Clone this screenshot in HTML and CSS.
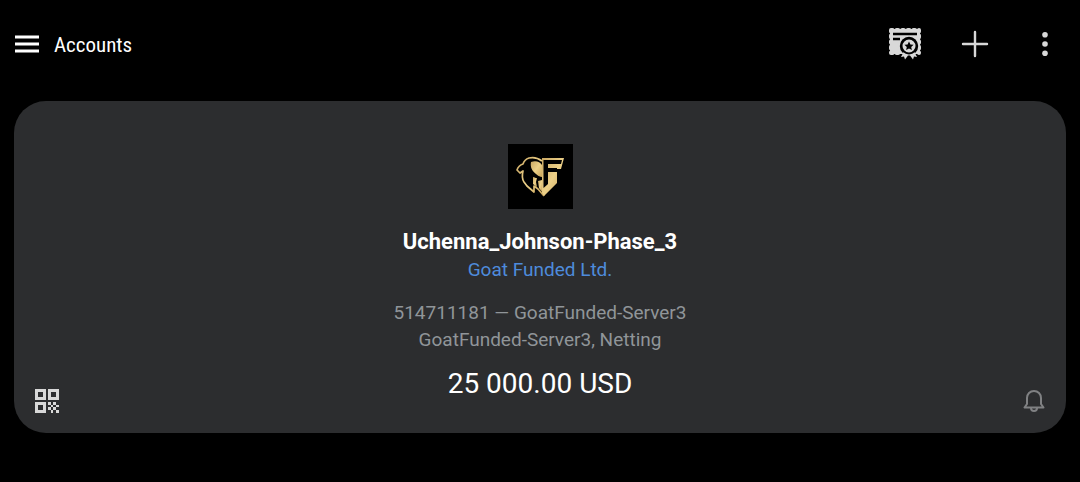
FILE: index.html
```html
<!DOCTYPE html>
<html lang="en">
<head>
    <meta charset="UTF-8">
    <meta name="viewport" content="width=device-width, initial-scale=1.0">
    <title>Accounts</title>
    <link rel="stylesheet" href="styles.css">
</head>
<body>
    <!-- Top bar -->
    <header class="topbar">
        <button class="icon-btn menu-btn" aria-label="Menu">
            <svg width="24" height="24" viewBox="0 0 24 24">
                <path d="M0 5h24M0 12h24M0 19h24" stroke="#fff" stroke-width="3"/>
            </svg>
        </button>
        <h1 class="title">Accounts</h1>
        <div class="actions">
            <button class="icon-btn" aria-label="Certificates">
                <svg width="34" height="34" viewBox="0 0 34 34">
                    <rect x="2" y="2" width="30" height="25" fill="#d8d8d8"/>
                    <path d="M3 3h28M3 26h10M3 3v23M31 3v23" fill="none" stroke="#d8d8d8" stroke-width="4" stroke-linecap="round" stroke-dasharray="1.600 4"/>
                    <path d="M5 7h24M5 12h7" stroke="#000" stroke-width="2.400"/>
                    <circle cx="21" cy="19" r="9.200" fill="#000"/>
                    <path d="M16 24l-3 6 3-.5 1 3 3-4h2l3 4 1-3 3 .5-3-6z" fill="#d8d8d8"/>
                    <circle cx="21" cy="19" r="7.500" fill="#d8d8d8" stroke="#000" stroke-width="2"/>
                    <path d="M21 14.500l1.400 2.900 3.200.4-2.400 2.200.7 3.100-2.900-1.600-2.900 1.600.7-3.100-2.400-2.200 3.200-.4z" fill="#000"/>
                </svg>
            </button>
            <button class="icon-btn" aria-label="Add account">
                <svg width="28" height="28" viewBox="0 0 28 28">
                    <path d="M14 2v24M2 14h24" stroke="#d8d8d8" stroke-width="2.400" stroke-linecap="round"/>
                </svg>
            </button>
            <button class="icon-btn" aria-label="More options">
                <svg width="28" height="28" viewBox="0 0 28 28" fill="#d8d8d8">
                    <circle cx="14" cy="4.700" r="2.800"/>
                    <circle cx="14" cy="14" r="2.800"/>
                    <circle cx="14" cy="23.300" r="2.800"/>
                </svg>
            </button>
        </div>
    </header>

    <!-- Current account -->
    <main class="card">
        <svg class="logo" viewBox="0 0 65 65" role="img" aria-label="Goat Funded">
            <defs>
                <linearGradient id="gold" x1="0" y1="0" x2="1" y2="1">
                    <stop offset="0" stop-color="#c9a763"/>
                    <stop offset=".5" stop-color="#ecd088"/>
                    <stop offset="1" stop-color="#c9a45a"/>
                </linearGradient>
            </defs>
            <rect width="65" height="65" fill="#000"/>
            <!-- goat head -->
            <path d="M34 17c-4-3-9-4-13-3-3 1-5 3-6 6-3 1-5 3-6 6l3 3 3-2c-1 4-1 8 1 11l3 4 7 6v-6l4 3 6 7" fill="none" stroke="url(#gold)" stroke-width="1.700" stroke-linejoin="round"/>
            <path d="M23 18c5-2 9 0 11 3v12c-2 0-4-1-6-3-4-3-6-7-5-12z" fill="url(#gold)"/>
            <path d="M25 33l4 1-1 4 1 5-4-3z" fill="url(#gold)"/>
            <path d="M30 37l4-1v12l-3-4z" fill="url(#gold)"/>
            <path d="M22 25c1 5 5 8 10 9" fill="none" stroke="#000" stroke-width="2"/>
            <!-- shield with the letter F -->
            <path d="M34 14h22l-3 11h-4v14L36 52l-2-3z" fill="url(#gold)"/>
            <path d="M35.500 16H54l-1 4H40v4h9v4h-9v12l-4.500 4z" fill="#000"/>
        </svg>
        <h2 class="name">Uchenna_Johnson-Phase_3</h2>
        <a class="broker" href="#">Goat Funded Ltd.</a>
        <div class="details">
            <p>514711181 — GoatFunded-Server3</p>
            <p>GoatFunded-Server3, Netting</p>
        </div>
        <p class="balance">25 000.00 USD</p>
        <button class="icon-btn corner qr" aria-label="Show QR code">
            <svg width="24" height="24" viewBox="0 0 24 24">
                <path d="M1.500 1.500h8v8h-8zM14.500 1.500h8v8h-8zM1.500 14.500h8v8h-8z" fill="none" stroke="#d8d8d8" stroke-width="3"/>
                <path d="M13 13h3v3h-3zM18 13h3v3h-3zM16 16h2v2h-2zM21 16h3v2h-3zM18 18h3v3h-3zM13 18h3v3h-3zM16 21h2v3h-2zM21 21h3v3h-3z" fill="#d8d8d8"/>
            </svg>
        </button>
        <button class="icon-btn corner bell" aria-label="Notifications">
            <svg width="24" height="24" viewBox="0 0 24 24" fill="none" stroke="#808183" stroke-width="2">
                <path d="M2.500 18.500h19l-2.500-3.500V9c0-4-3-7-7-7s-7 3-7 7v6z" stroke-linejoin="round"/>
                <path d="M9 19c0 4 6 4 6 0"/>
            </svg>
        </button>
    </main>
</body>
</html>
```
FILE: styles.css
```css
:root {
    --bg: #000;
    --card-bg: #2c2d2f;
    --text: #fff;
    --muted: #909599;
    --link: #4e8bdc;
}

* {
    box-sizing: border-box;
}

body {
    margin: 0;
    background-color: var(--bg);
    color: var(--text);
    font-family: Roboto, sans-serif;
}

h1, h2, p {
    margin: 0;
}

.icon-btn {
    display: flex;
    padding: 0;
    border: none;
    background: none;
    cursor: pointer;
}

/* Top bar */
.topbar {
    display: flex;
    align-items: center;
    height: 88px;
    padding: 0 21px 0 15px;
}

.title {
    margin-left: 15px;
    padding-top: 2px;
    font-family: "Roboto Condensed", "Liberation Sans Narrow", Roboto, sans-serif;
    font-size: 21px;
    font-weight: 400;
    line-height: 28px;
}

.actions {
    display: flex;
    align-items: center;
    gap: 42px;
    margin-left: auto;
}

.actions .icon-btn:first-child {
    margin-right: -3px;
}

/* Account card */
.card {
    position: relative;
    display: flex;
    flex-direction: column;
    align-items: center;
    margin: 13px 14px;
    padding: 43px 20px 31px;
    border-radius: 32px;
    background-color: var(--card-bg);
    text-align: center;
}

.logo {
    width: 65px;
    height: 65px;
}

.name {
    margin-top: 19px;
    font-size: 22px;
    font-weight: 700;
    line-height: 28px;
}

.broker {
    color: var(--link);
    font-size: 19px;
    line-height: 28px;
    text-decoration: none;
}

.details {
    margin-top: 15px;
    color: var(--muted);
    font-size: 19px;
    line-height: 27px;
}

.balance {
    margin-top: 13px;
    font-size: 28px;
    line-height: 36px;
}

.corner {
    position: absolute;
    bottom: 20px;
}

.qr {
    left: 21px;
}

.bell {
    right: 20px;
}
```
